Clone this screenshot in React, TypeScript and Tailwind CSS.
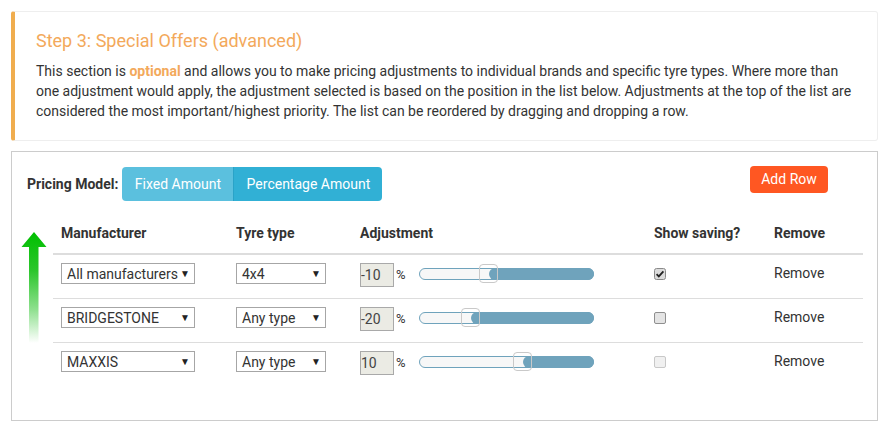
const ROWS = [
  { maker: "All manufacturers", type: "4x4", value: -10, saving: "checked" },
  { maker: "BRIDGESTONE", type: "Any type", value: -20, saving: "off" },
  { maker: "MAXXIS", type: "Any type", value: 10, saving: "disabled" },
];

function FakeSelect({ label, width }: { label: string; width: string }) {
  return (
    <div className={`${width} h-[21px] flex items-center justify-between border border-[#a6a6a6] bg-white pl-[5px] pr-[4px] text-[14px] text-[#333]`}>
      <span className="whitespace-nowrap leading-none">{label}</span>
      <span className="text-[10px] leading-none text-[#222]">▼</span>
    </div>
  );
}

function Slider({ value }: { value: number }) {
  // range -50..50 over a 175px track
  const pos = ((value + 50) / 100) * 173;
  return (
    <div className="relative w-[175px] h-[12px] rounded-full border border-[#6fa3bc] bg-[#f7f7f7]">
      <div className="absolute top-[-1px] bottom-[-1px] right-[-1px] rounded-full bg-[#6fa3bc]" style={{ left: pos }} />
      <div className="absolute top-[-5px] w-[19px] h-[19px] rounded-[4px] border border-[#c9c9c9]" style={{ left: pos - 10 }} />
    </div>
  );
}

function Check({ state }: { state: string }) {
  if (state === "checked") {
    return (
      <svg width="12" height="12" viewBox="0 0 12 12">
        <rect x="0.5" y="0.5" width="11" height="11" rx="2" fill="#dcdcdc" stroke="#8a8a8a" />
        <path d="M2.6 6.2l2.2 2.2 4.6-5" stroke="#222" strokeWidth="1.8" fill="none" />
      </svg>
    );
  }
  const disabled = state === "disabled";
  return (
    <div className={`w-[12px] h-[12px] rounded-[2px] border ${disabled ? "border-[#c8c8c8] bg-[#f0f0f0]" : "border-[#8f8f8f] bg-[#e4e4e4]"}`} />
  );
}

function PriorityArrow() {
  return (
    <svg width="26" height="111" viewBox="0 0 26 111">
      <defs>
        <linearGradient id="fade" x1="0" y1="0" x2="0" y2="1">
          <stop offset="0" stopColor="#00bf00" />
          <stop offset="0.35" stopColor="#2cc62c" />
          <stop offset="0.7" stopColor="#8fe08f" />
          <stop offset="1" stopColor="#ffffff" />
        </linearGradient>
      </defs>
      <path d="M13 0L25.5 15H17.5V111H8V15H0.5Z" fill="url(#fade)" />
    </svg>
  );
}

export default function App() {
  return (
    <div className="w-[891px] h-[434px] bg-white pt-[11px] pl-[11px] font-['Roboto','Liberation_Sans',sans-serif] text-[#333]">
      {/* Intro card */}
      <div className="w-[867px] rounded-[3px] border border-[#eee] border-l-[4px] border-l-[#f0ad4e] pl-[21px] pr-[20px] pt-[19px] pb-[19px]">
        <h3 className="text-[18px] leading-[20px] text-[#f3a95b] mb-[10px]">Step 3: Special Offers (advanced)</h3>
        <p className="text-[14px] leading-[20px]">
          This section is <span className="font-bold text-[#f3a95b]">optional</span> and allows you to make pricing adjustments to individual brands and specific tyre types. Where more than
          <br />
          one adjustment would apply, the adjustment selected is based on the position in the list below. Adjustments at the top of the list are
          <br />
          considered the most important/highest priority. The list can be reordered by dragging and dropping a row.
        </p>
      </div>

      {/* Offers panel */}
      <div className="mt-[10px] w-[867px] h-[270px] border border-[#ccc] pt-[15px]">
        <div className="flex items-start pl-[15px]">
          <div className="h-[34px] flex items-center text-[14px] font-bold">Pricing Model:</div>
          <div className="ml-[4px] flex h-[34px] rounded-[4px] overflow-hidden text-[14px] text-white">
            <div className="w-[111px] flex items-center justify-center bg-[#5bc0de]">Fixed Amount</div>
            <div className="w-[149px] flex items-center justify-center bg-[#31b0d5] border-l border-[#2aa3c8]">Percentage Amount</div>
          </div>
          <div className="ml-auto mr-[49px] -mt-px h-[27px] w-[78px] flex items-center justify-center rounded-[4px] bg-[#ff5722] text-[14px] text-white">
            Add Row
          </div>
        </div>

        <div className="mt-[14px] flex">
          <div className="w-[41px] pl-[9px] pt-[17px]">
            <PriorityArrow />
          </div>
          <div className="w-[810px] text-[14px]">
            <div className="flex pt-[8px] pb-[10px] leading-[20px] font-bold border-b-2 border-[#ddd]">
              <div className="w-[175px] pl-[8px]">Manufacturer</div>
              <div className="w-[124px] pl-[8px]">Tyre type</div>
              <div className="w-[294px] pl-[8px]">Adjustment</div>
              <div className="w-[120px] pl-[8px]">Show saving?</div>
              <div className="w-[97px] pl-[8px]">Remove</div>
            </div>
            {ROWS.map((r, i) => (
              <div key={i} className={`flex items-start h-[44px] pt-[8px] ${i < ROWS.length - 1 ? "border-b border-[#ddd]" : ""}`}>
                <div className="w-[175px] pl-[8px]">
                  <FakeSelect label={r.maker} width="w-[134px]" />
                </div>
                <div className="w-[124px] pl-[8px]">
                  <FakeSelect label={r.type} width="w-[90px]" />
                </div>
                <div className="w-[294px] pl-[8px] flex items-center">
                  <div className="w-[34px] h-[24px] flex items-center border border-[#a9a9a9] bg-[#ebebe4] text-[14px] text-[#444] overflow-hidden">
                    {r.value}
                  </div>
                  <span className="ml-[2px] text-[13px]">%</span>
                  <div className="ml-[13px] -mt-[3px]">
                    <Slider value={r.value} />
                  </div>
                </div>
                <div className="w-[120px] pl-[8px] pt-[5px]">
                  <Check state={r.saving} />
                </div>
                <div className="w-[97px] pl-[8px] leading-[20px]">Remove</div>
              </div>
            ))}
          </div>
        </div>
      </div>
    </div>
  );
}
